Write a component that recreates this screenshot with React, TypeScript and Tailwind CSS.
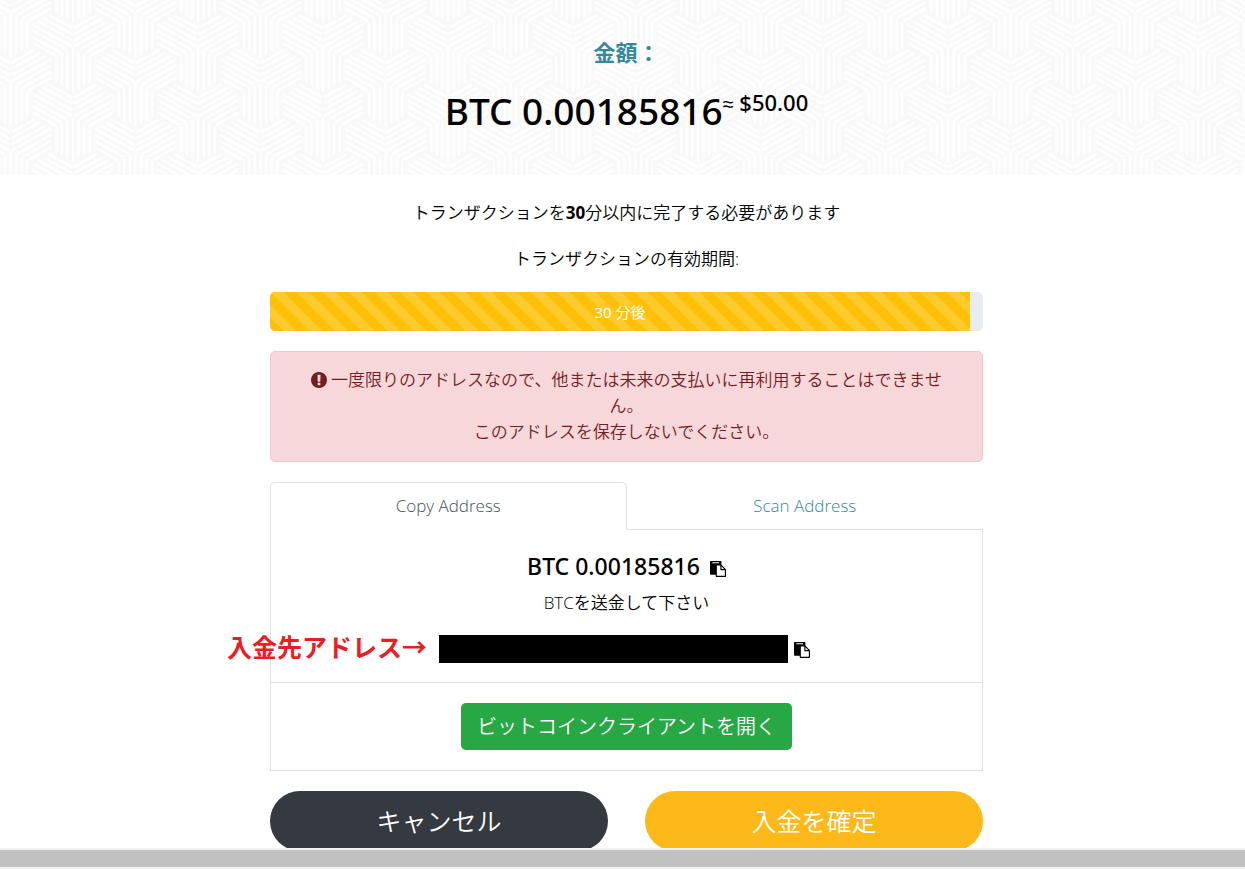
import { useState } from 'react'
import type { ReactNode } from 'react'

const AMOUNT = 'BTC 0.00185816'

// Woven background: three striped hexagons meet at every node of the tile
const TILE_W = 125
const TILE_H = 69.5
const U = TILE_W / 6
const W = TILE_H / 3
const A = [U, W / 2]
const B = [-U, W / 2]
const C = [0, -W]
const BUNDLES = [
  [A, B, C],
  [B, C, A],
  [C, A, B],
]

function nodePath(x: number, y: number) {
  let d = ''
  for (const [left, right, back] of BUNDLES) {
    for (let k = -3; k <= 3; k++) {
      const t = Math.abs(k) / 3.75
      const edge = k < 0 ? left : right
      const x1 = x + t * edge[0] - 0.04 * back[0]
      const y1 = y + t * edge[1] - 0.04 * back[1]
      const len = 1.9 - t
      d += `M${x1.toFixed(1)} ${y1.toFixed(1)}l${(-back[0] * len).toFixed(1)} ${(-back[1] * len).toFixed(1)}`
    }
  }
  return d
}

const WEAVE = [-1, 0, 1]
  .flatMap((i) =>
    [-1, 0, 1].flatMap((j) => [
      nodePath(73 + i * TILE_W, 47 + j * TILE_H),
      nodePath(73 + (i + 0.5) * TILE_W, 47 + (j + 0.5) * TILE_H),
    ])
  )
  .join('')

function Weave() {
  return (
    <svg className="absolute inset-0 w-full h-full" aria-hidden="true">
      <defs>
        <pattern id="weave" width={TILE_W} height={TILE_H} patternUnits="userSpaceOnUse">
          <path d={WEAVE} stroke="#fff" strokeWidth="2" fill="none" />
        </pattern>
      </defs>
      <rect width="100%" height="100%" fill="url(#weave)" />
    </svg>
  )
}

function CopyIcon() {
  return (
    <svg viewBox="0 0 1792 1792" className="w-4 h-4" fill="currentColor" fillRule="evenodd" aria-hidden="true">
      <path d="M768 1664h896v-640h-416q-40 0-68-28t-28-68v-416h-384v1152zM1024 224v-64q0-13-9.5-22.5t-22.5-9.5h-704q-13 0-22.5 9.5t-9.5 22.5v64q0 13 9.5 22.5t22.5 9.5h704q13 0 22.5-9.5t9.5-22.5zM1280 896h299l-299-299v299zM1792 1024v672q0 40-28 68t-68 28h-960q-40 0-68-28t-28-68v-160h-544q-40 0-68-28t-28-68v-1344q0-40 28-68t68-28h1088q40 0 68 28t28 68v328q21 13 36 28l408 408q28 28 48 76t20 88z" />
    </svg>
  )
}

function AlertIcon() {
  return (
    <svg viewBox="128 128 1536 1536" className="inline-block w-4 h-4 mr-1 align-[-2px]" fill="currentColor" aria-hidden="true">
      <path d="M896 128q209 0 385.5 103t279.5 279.5 103 385.5-103 385.5-279.5 279.5-385.5 103-385.5-103-279.5-279.5-103-385.5 103-385.5 279.5-279.5 385.5-103zm128 1247v-190q0-14-9-23.5t-22-9.5h-192q-13 0-23 10t-10 23v190q0 13 10 23t23 10h192q13 0 22-9.5t9-23.5zm-2-344l18-621q0-12-10-18-10-8-24-8h-220q-14 0-24 8-10 6-10 18l17 621q0 10 10 17.5t24 7.5h185q14 0 23.5-7.5t10.5-17.5z" />
    </svg>
  )
}

function Tab({ active, onClick, children }: { active: boolean; onClick: () => void; children: ReactNode }) {
  return (
    <button
      role="tab"
      aria-selected={active}
      onClick={onClick}
      className={`flex-1 py-[10px] border border-b-0 rounded-t-[5px] ${
        active ? 'bg-white border-[#dee2e6] text-[#495057] -mb-px pb-[11px]' : 'border-transparent text-[#338a99]'
      }`}
    >
      {children}
    </button>
  )
}

export default function App() {
  const [tab, setTab] = useState('copy')

  return (
    <div className="h-screen flex flex-col bg-white text-black text-[17px] leading-[26px] font-['Open_Sans','Noto_Sans_CJK_JP',sans-serif]">
      <div className="flex-1 min-h-0 overflow-hidden">
        <header className="relative bg-[#f9f9f9] pl-2 pt-9 pb-[38px]">
          <Weave />
          <div className="relative text-center">
            <h2 className="text-[22px] leading-8 font-bold text-[#338a99]">金額：</h2>
            <h1 className="flex justify-center items-start mt-4 font-medium font-['Noto_Sans',sans-serif]">
              <span className="text-[37px] leading-[53px]">{AMOUNT}</span>
              <span className="text-[22px] leading-9">
                <span className="text-xl">≈</span> $50.00
              </span>
            </h1>
          </div>
        </header>

        <main className="pl-2 pt-[25px]">
          <div className="max-w-[713px] mx-auto flex flex-col gap-5 text-center font-[350]">
            <p>
              トランザクションを<b className="font-bold">30</b>分以内に完了する必要があります
            </p>
            <p>トランザクションの有効期間:</p>

            <div
              role="progressbar"
              aria-valuenow={98}
              className="h-[39px] bg-[#e9ecef] rounded-[5px] overflow-hidden text-[15px] font-normal text-white"
            >
              <div className="w-[98.2%] h-full flex items-center justify-center bg-[#ffc107] bg-[linear-gradient(45deg,rgba(255,255,255,.15)_25%,transparent_25%,transparent_50%,rgba(255,255,255,.15)_50%,rgba(255,255,255,.15)_75%,transparent_75%,transparent)] bg-[length:26px_26px]">
                30 分後
              </div>
            </div>

            <div role="alert" className="px-9 pt-[15px] pb-4 bg-[#f8d7da] border border-[#f5c6cb] rounded-[5px] text-[#721c24] [line-break:anywhere]">
              <AlertIcon />
              一度限りのアドレスなので、他または未来の支払いに再利用することはできません。
              <br />
              このアドレスを保存しないでください。
            </div>

            <section>
              <div role="tablist" className="relative flex">
                <Tab active={tab === 'copy'} onClick={() => setTab('copy')}>
                  Copy Address
                </Tab>
                <Tab active={tab === 'scan'} onClick={() => setTab('scan')}>
                  Scan Address
                </Tab>
              </div>

              <div className="border border-[#dee2e6]">
                <div className="pt-5 pb-[19px] border-b border-[#dee2e6]">
                  <div className="flex justify-center items-center gap-[10px]">
                    <h3 className="text-[23px] leading-8 font-medium font-['Noto_Sans',sans-serif]">{AMOUNT}</h3>
                    <button aria-label="Copy amount" className="pt-[6px]">
                      <CopyIcon />
                    </button>
                  </div>
                  <p className="mt-2">BTCを送金して下さい</p>
                  <div className="mt-[19px] pr-1 flex justify-center items-center gap-[6px]">
                    <div className="relative w-[349px] h-7 bg-black">
                      <span className="absolute right-full bottom-1 mr-3 whitespace-nowrap text-[25px] font-bold text-[#ed1c24] font-['Noto_Sans_CJK_JP',sans-serif]">
                        入金先アドレス→
                      </span>
                    </div>
                    <button aria-label="Copy address" className="pt-[2px]">
                      <CopyIcon />
                    </button>
                  </div>
                </div>
                <div className="py-5 flex justify-center">
                  <a href="#" className="px-4 leading-[47px] rounded-[5px] bg-[#28a745] text-white text-xl">
                    ビットコインクライアントを開く
                  </a>
                </div>
              </div>
            </section>

            <div className="grid grid-cols-2 gap-[37px] text-[25px] leading-[60px] text-white">
              <button className="rounded-full bg-[#343a40]">キャンセル</button>
              <button className="rounded-full bg-[#fdb919]">入金を確定</button>
            </div>
          </div>
        </main>
      </div>

      {/* horizontal scrollbar */}
      <div className="h-[21px] bg-[#c1c1c1] border-y-2 border-[#f1f1f1]" />
    </div>
  )
}
